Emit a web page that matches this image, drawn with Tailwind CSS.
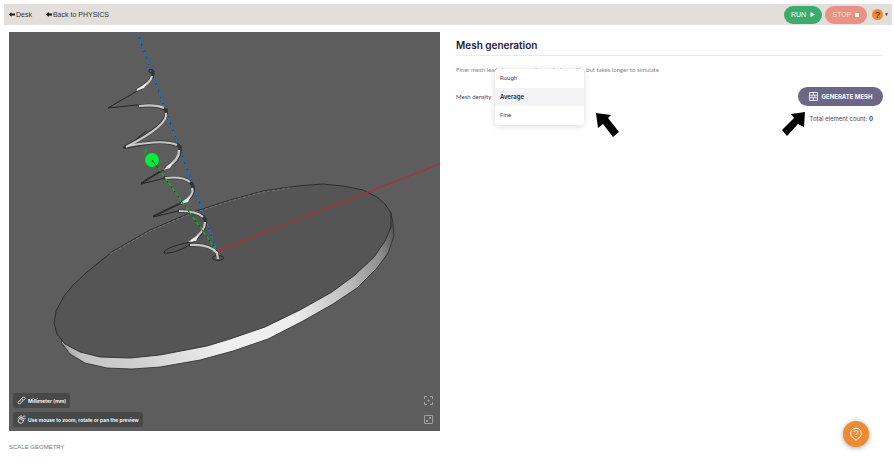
<!DOCTYPE html>
<html lang="en">
<head>
<meta charset="utf-8">
<meta name="viewport" content="width=device-width, initial-scale=1">
<title>Mesh generation</title>
<script src="https://cdn.jsdelivr.net/npm/@tailwindcss/browser@4"></script>
</head>
<body class="min-h-screen bg-white font-[Lato,sans-serif] text-[6px] leading-[8px] text-[#45405f]">
<header class="mt-1 mr-0.5 ml-1 flex h-[21px] items-center bg-[#e1dedb] pr-1 pl-[5px] font-['Liberation_Sans',sans-serif] text-[7px] text-[#333]">
  <nav class="flex gap-[14px]">
    <a href="#" class="flex items-center gap-px"><svg class="h-[5px] w-[6px]" viewBox="0 0 6 5"><path d="M0 2.5 2.5.3v1.2H6v2H2.500v1.200z" fill="#111"/></svg>Desk</a>
    <a href="#" class="flex items-center gap-px"><svg class="h-[5px] w-[6px]" viewBox="0 0 6 5"><path d="M0 2.500 2.800 0v1.600H6v1.800H2.800V5z" fill="#111"/></svg>Back to PHYSICS</a>
  </nav>
  <div class="ml-auto flex items-center gap-[3px] text-white">
    <button class="flex h-[18px] w-[38px] items-center justify-center gap-1 rounded-full bg-[#3dab6b]">RUN<svg class="h-[5px] w-[5px]" viewBox="0 0 5 5"><path d="M.5 0 5 2.500.5 5z" fill="#fff"/></svg></button>
    <button class="flex h-[18px] w-[42px] items-center justify-center gap-1 rounded-full bg-[#e99182] text-[#fbe3df]">STOP<span class="h-1 w-1 bg-white"></span></button>
    <button class="ml-0.5 flex items-center gap-0.5" aria-label="Help menu"><span class="flex size-[11px] items-center justify-center rounded-full bg-[#f08a30] text-[9px] text-[#222]">?</span><svg class="h-[3px] w-[3px]" viewBox="0 0 3 3"><path d="M0 .3h3L1.500 3z" fill="#444"/></svg></button>
  </div>
</header>

<main class="grid grid-cols-[431fr_427fr] gap-4 pt-[7px] pr-[11px] pl-[9px]">
  <section>
    <div class="relative">
      <svg class="block w-full" viewBox="9 32 431 399" role="img" aria-label="Geometry preview">
        <defs>
          <linearGradient id="rim" gradientUnits="userSpaceOnUse" x1="60" y1="360" x2="394" y2="230">
            <stop offset="0" stop-color="#8d8d8d"/><stop offset=".06" stop-color="#c4c4c4"/><stop offset=".2" stop-color="#cfcfcf"/><stop offset=".45" stop-color="#f0f0f0"/><stop offset=".65" stop-color="#ededed"/><stop offset=".82" stop-color="#bdbdbd"/><stop offset=".94" stop-color="#8c8c8c"/><stop offset="1" stop-color="#555"/>
          </linearGradient>
        </defs>
        <path fill="#5d5d5d" d="M9 32h431v399H9z"/>
        <path fill="url(#rim)" stroke="#2b2b2b" stroke-width=".8" d="M61 342 70 354 85 363 107 368 132 369 160 367 200 360 233 351 268 339 303 321 333 304 357 288 377 268 388 253 394 236 393 223 391 213 300 250 100 320z"/>
        <path fill="#555" stroke="#222" stroke-width=".8" d="M54 323 56 311 64 296 73 285 87 272 113 251 150 230 190 213 230 200 263 191 297 186 323 184 343 186 363 190 377 197 385 204 391 213 391 227 385 241 374 257 355 275 332 292 300 310 265 327 230 339 207 346 160 355 130 358 100 357 80 352 65 344 57 334z"/>
        <path fill="none" stroke="#999" stroke-width=".6" stroke-dasharray="3 2" d="M110 254 150 231 190 214 230 201 263 192 290 188"/>
        <path stroke="#d0202a" d="M217 251 440 164"/>
        <path stroke="#222" stroke-width=".8" d="M137 32 217 251"/>
        <path stroke="#2478cc" stroke-width="1.200" stroke-dasharray="6 1" d="M137 32 217 251"/>
        <g fill="none" stroke="#252525" stroke-width="1">
          <path d="M153 73C151 86 136 91 108 108L137 105Q155 104 166 110M123 148Q136 141 146 131M123 148 148 143M165 169 141 184 165 178M160 171 141 183M182 203 153 217 178 211M182 202 153 216M190 242C181 244 164 248 164 253C170 254 185 249 190 244"/>
          <ellipse cx="151" cy="71" rx="2.200" ry="1.800"/><ellipse cx="218" cy="258" rx="5.500" ry="2.400"/>
        </g>
        <g fill="none" stroke="#353535" stroke-linecap="round">
          <path stroke-width="3.400" d="M153 72Q154 81 137 90M166 110Q171 124 125 147M180 147Q182 158 166 168M192 184Q197 195 182 203M205 219Q207 231 192 241"/>
          <path stroke-width="3.400" d="M140 106Q158 104 166 110M127 147Q165 138 179 146M165 178Q187 176 192 184M179 211Q201 212 205 219M190 245Q210 244 217 253L218 257"/>
        </g>
        <g fill="none" stroke="#c8c8c8" stroke-width="2.200">
          <path d="M152 76Q151 83 137 90M166 113Q169 125 126 147M179 150Q180 159 166 168M192 188Q195 195 182 203M205 222Q205 232 191 241"/>
          <path d="M139 106Q156 104 164 108M128 146Q164 139 177 145M165 178Q183 176 190 182M179 211Q197 211 203 217M190 245Q210 244 217 253L218 259"/>
        </g>
        <g fill="#eee"><path d="M135 91 148 82 144 88z"/><path d="M163 170 174 161 170 168z"/><path d="M180 204 191 196 188 202z"/><path d="M188 242 199 235 196 241z"/></g>
        <circle cx="152" cy="160" r="7" fill="#00ef38"/>
        <path stroke="#143d18" stroke-width=".9" d="M152 160 217 251"/>
        <path stroke="#1fb52d" stroke-width="1.200" stroke-dasharray="4 2" d="M158 168 217 251"/>
        <path fill="none" stroke="#1fb52d" stroke-width=".8" d="M144 149 145.500 151.500 147 149M145.500 151.500 144.500 154"/>
      </svg>
      <div class="absolute bottom-1 left-1 flex flex-col items-start gap-1 font-[Inter,sans-serif] text-[5px] font-semibold text-white">
        <button class="flex h-[15px] items-center gap-0.5 rounded-xs bg-[#484848] px-1"><svg class="size-[9px]" viewBox="0 0 9 9" fill="none" stroke="#eee" stroke-width=".9"><path d="M.8 6.500 6.500.8 8.200 2.500 2.500 8.200zM3 4.500l1 1M4.700 2.800l1 1"/></svg>Millimeter (mm)</button>
        <div class="flex h-[15px] items-center gap-0.5 rounded-xs bg-[#484848] px-1"><svg class="size-[9px]" viewBox="0 0 9 9" fill="none" stroke="#eee" stroke-width=".8"><ellipse cx="4" cy="5.400" rx="2.500" ry="3" transform="rotate(35 4 5.400)"/><path d="M2.500 3.200 6 5.600M4.500 4.500 6.500 1M1 3.200Q2.300.8 5 .8M6.500 1l2 .2M7 3l1.500.5"/></svg>Use mouse to zoom, rotate or pan the preview</div>
      </div>
      <div class="absolute right-[7px] bottom-[7px] flex flex-col gap-[10px]">
        <button aria-label="Center view"><svg class="block size-[9px]" viewBox="0 0 9 9" fill="none" stroke="#a5a5a5"><path d="M.5 3V.5H3M6 .5h2.500V3M8.500 6v2.500H6M3 8.500H.5V6M4.500 3.500v2M3.500 4.500h2"/></svg></button>
        <button aria-label="Full screen"><svg class="block size-[9px]" viewBox="0 0 9 9" fill="none" stroke="#a5a5a5"><path d="M.5.5h8v8h-8zM5 2.500h1.500V4M6.500 2.500 4.800 4.200M2.500 5v1.500H4M2.500 6.500l1.500-1.500" stroke-width=".9"/></svg></button>
      </div>
    </div>
    <h2 class="mt-3 font-['Liberation_Sans',sans-serif] text-[#777]">SCALE GEOMETRY</h2>
  </section>

  <section>
    <h1 class="border-b border-[#eaeaec] pt-[7px] pb-[3px] font-[Inter,sans-serif] text-[10px] leading-[13px] font-semibold text-[#1d1842]">Mesh generation</h1>
    <p class="mt-[10px] text-[#85858b]">Finer mesh leads to more precise analysis results, but takes longer to simulate</p>
    <div class="mt-[13px] flex items-center justify-between">
      <div class="relative flex items-center gap-[5px]">
        <label for="density" class="w-[34px] whitespace-nowrap">Mesh density</label>
        <select id="density" class="h-3 w-[88px] appearance-none px-[5px]"><option>Rough</option><option selected>Average</option><option>Fine</option></select>
        <div role="listbox" aria-label="Mesh density" class="absolute top-1/2 left-[39px] flex w-[89px] -translate-y-1/2 flex-col overflow-hidden rounded-[3px] bg-white font-[Roboto,sans-serif] shadow-[0_1px_6px_rgba(0,0,0,0.15)]">
          <button role="option" aria-selected="false" class="h-[19px] px-[5px] text-left">Rough</button>
          <button role="option" aria-selected="true" class="h-[18px] bg-[#f4f4f6] px-[5px] text-left font-[Inter,sans-serif] font-semibold text-[#1d1842]">Average</button>
          <button role="option" aria-selected="false" class="h-[19px] px-[5px] text-left">Fine</button>
        </div>
        <svg class="absolute top-[22px] left-[140px] h-6 w-[23px]" viewBox="596 113 23 24"><path d="M596 113 611 115 608 118 619 132 613 137 603 124 598 128z"/></svg>
      </div>
      <div class="relative">
        <button class="flex h-[19px] w-[85px] items-center justify-center gap-1 rounded-full bg-[#6b6784] font-[Inter,sans-serif] font-bold whitespace-nowrap text-white"><svg class="size-[9px]" viewBox="0 0 9 9" fill="none" stroke="#fff" stroke-width=".8"><path d="M.5.5h8v8h-8zM.5 3.200h8M.5 5.800h8M4.500.5v2.700M3 3.200v2.600M6 3.200v2.600M4.500 5.800v2.700"/></svg>GENERATE MESH</button>
        <svg class="absolute top-[25px] -left-4 h-6 w-[23px]" viewBox="782 113 23 24"><path d="M805 113 791 115 794 119 782 131 787 137 798 125 804 128z"/></svg>
      </div>
    </div>
    <p class="mt-[9px] pr-[10px] text-right font-[Inter,sans-serif]">Total element count: <b>0</b></p>
  </section>
</main>

<button aria-label="Support" class="fixed right-[25px] bottom-5 flex size-[26px] items-center justify-center rounded-full bg-[#f08a30] shadow-[0_1px_5px_rgba(0,0,0,0.35)]">
  <svg class="size-[14px]" viewBox="0 0 14 14" fill="none" stroke="#fff"><path d="M7 13.500 5.300 11.500A5.300 5.300 0 1 1 8.700 11.500zM5.200 5.200Q5.200 3.500 7 3.500T8.800 5.100Q8.800 6 7.800 6.500 7 7 7 8M7 9v1"/></svg>
</button>
</body>
</html>
